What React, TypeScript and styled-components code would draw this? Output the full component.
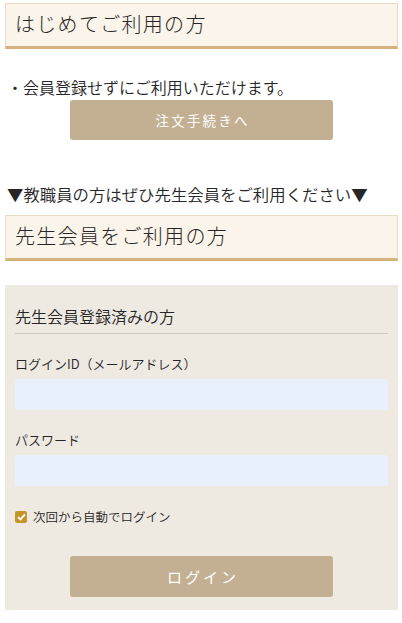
import React from "react";
import styled, { createGlobalStyle } from "styled-components";

const GlobalStyle = createGlobalStyle`
  html, body { margin: 0; padding: 0; background: #ffffff; }
  body {
    font-family: "Noto Sans CJK JP", "Noto Sans", sans-serif;
    font-weight: 350;
    color: #262626;
  }
  * { box-sizing: border-box; }
`;

const Page = styled.div`
  width: 402px;
  padding: 3px 4px 14px 5px;
  display: flex;
  flex-direction: column;
`;

const Heading = styled.h2<{ $mt?: number }>`
  margin: ${(p) => p.$mt ?? 0}px 0 0;
  height: 46px;
  display: flex;
  align-items: center;
  padding: 0 9px 2px;
  background: #fbf4ea;
  border: 1px solid #e9dcc2;
  border-bottom: 3px solid #d5b27d;
  font-size: 20px;
  font-weight: 300;
  letter-spacing: 1.3px;
  color: #262626;
  line-height: 1;
`;

const Note = styled.p<{ $mt: number; $size?: number }>`
  margin: ${(p) => p.$mt}px 0 0;
  font-size: ${(p) => p.$size ?? 16}px;
  font-weight: 350;
  line-height: 24px;
  color: #262626;
  padding-left: 2px;
`;

const GoldButton = styled.button<{ $mt: number; $h: number; $size: number; $ls: number }>`
  align-self: center;
  margin: ${(p) => p.$mt}px 0 0;
  width: 263px;
  height: ${(p) => p.$h}px;
  border: none;
  border-radius: 3px;
  background: #c3b092;
  color: #ffffff;
  font-family: "Noto Sans CJK JP", sans-serif;
  font-weight: 400;
  font-size: ${(p) => p.$size}px;
  letter-spacing: ${(p) => p.$ls}px;
  padding: 0 0 0 ${(p) => p.$ls}px;
  display: flex;
  align-items: center;
  justify-content: center;
  cursor: pointer;
`;

const Panel = styled.section`
  margin-top: 24px;
  background: #eeeae2;
  padding: 19px 10px 13px;
  display: flex;
  flex-direction: column;
`;

const PanelTitle = styled.h3`
  margin: 0;
  font-size: 16px;
  font-weight: 350;
  line-height: 24px;
  padding-bottom: 5px;
  border-bottom: 1px solid #cfcbc3;
  color: #262626;
`;

const Label = styled.label<{ $mt: number }>`
  display: block;
  margin-top: ${(p) => p.$mt}px;
  font-size: 13px;
  line-height: 20px;
  color: #262626;
`;

const Field = styled.input`
  display: block;
  margin-top: 5px;
  width: 100%;
  height: 31px;
  border: none;
  border-radius: 3px;
  background: #e8f0fe;
  outline: none;
  padding: 0 8px;
  font-size: 14px;
`;

const CheckRow = styled.label`
  margin-top: 21px;
  display: flex;
  align-items: center;
  gap: 6px;
  font-size: 12.5px;
  line-height: 20px;
  color: #262626;
`;

const CheckBox = styled.span`
  width: 12px;
  height: 12px;
  border-radius: 2px;
  background: #c4952b;
  display: flex;
  align-items: center;
  justify-content: center;
`;

export default function App() {
  return (
    <>
      <GlobalStyle />
      <Page>
        <Heading>はじめてご利用の方</Heading>
        <Note $mt={26}>・会員登録せずにご利用いただけます。</Note>
        <GoldButton $mt={1} $h={40} $size={13.5} $ls={2.2}>
          注文手続きへ
        </GoldButton>
        <Note $mt={42} $size={16.4}>
          ▼教職員の方はぜひ先生会員をご利用ください▼
        </Note>
        <Heading $mt={9}>先生会員をご利用の方</Heading>
        <Panel>
          <PanelTitle>先生会員登録済みの方</PanelTitle>
          <Label $mt={20}>ログインID（メールアドレス）</Label>
          <Field type="text" />
          <Label $mt={20}>パスワード</Label>
          <Field type="password" />
          <CheckRow>
            <CheckBox>
              <svg width="9" height="8" viewBox="0 0 9 8">
                <path d="M1 4.2 L3.4 6.4 L8 1.4" fill="none" stroke="#ffffff" strokeWidth="1.8" />
              </svg>
            </CheckBox>
            次回から自動でログイン
          </CheckRow>
          <GoldButton $mt={29} $h={41} $size={15} $ls={3}>
            ログイン
          </GoldButton>
        </Panel>
      </Page>
    </>
  );
}
